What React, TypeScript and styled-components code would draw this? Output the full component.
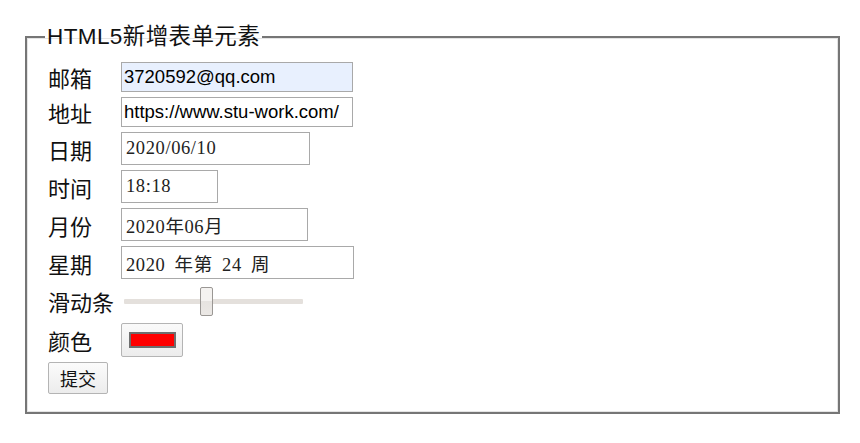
import styled, { createGlobalStyle } from "styled-components";

const GlobalStyle = createGlobalStyle`
  body {
    margin: 0;
    background: #fff;
    font-family: "Liberation Sans", "Noto Sans CJK SC", sans-serif;
    color: #111;
  }
`;

const Page = styled.div`
  padding: 24px 0 0 25px;
`;

const Fieldset = styled.fieldset`
  box-sizing: border-box;
  width: 815px;
  height: 390px;
  margin: 0;
  padding: 12px 0 0 21px;
  border: 2px solid #767676;
  box-shadow: inset 0 0 0 1px #e4e4e4;
`;

const Legend = styled.legend`
  margin-left: -3px;
  padding: 0 2px;
  font-size: 22.5px;
  letter-spacing: 0.4px;
  line-height: 26px;
  color: #111;
`;

const Form = styled.form`
  display: flex;
  flex-direction: column;
  gap: 5px;
`;

const Row = styled.div<{ $h: number }>`
  display: flex;
  align-items: center;
  height: ${(p) => p.$h}px;
`;

const Label = styled.span`
  min-width: 73px;
  font-family: "Noto Sans CJK SC", sans-serif;
  font-size: 22px;
  line-height: 26px;
  color: #111;
`;

const TextInput = styled.input<{ $w: number; $filled?: boolean }>`
  box-sizing: border-box;
  width: ${(p) => p.$w}px;
  height: 100%;
  margin: 0;
  padding: 0 2px;
  border: 1px solid #a9a9a9;
  border-radius: 0;
  outline: none;
  background: ${(p) => (p.$filled ? "#e8f0fe" : "#fff")};
  font-family: "Liberation Sans", sans-serif;
  font-size: 18.5px;
  color: #000;
`;

const DateInput = styled.input<{ $w: number }>`
  box-sizing: border-box;
  width: ${(p) => p.$w}px;
  height: 100%;
  margin: 0;
  padding: 0 4px;
  border: 1px solid #a9a9a9;
  border-radius: 0;
  outline: none;
  background: #fff;
  font-family: "Liberation Serif", "Noto Sans CJK SC", serif;
  font-size: 18.5px;
  letter-spacing: 0.6px;
  word-spacing: 4px;
  color: #222;
`;

const Range = styled.input`
  -webkit-appearance: none;
  appearance: none;
  width: 179px;
  height: 30px;
  margin: 0 0 0 3px;
  background: transparent;

  &::-webkit-slider-runnable-track {
    height: 5px;
    background: #e4e0dc;
    border-radius: 1px;
  }

  &::-webkit-slider-thumb {
    -webkit-appearance: none;
    width: 13px;
    height: 29px;
    margin-top: -12px;
    box-sizing: border-box;
    border: 1px solid #9a9794;
    border-radius: 2px;
    background: linear-gradient(#f4f2f0 0%, #f4f2f0 50%, #e6e3e0 50%, #ebe8e5 100%);
  }
`;

const ColorButton = styled.button`
  box-sizing: border-box;
  width: 62px;
  height: 34px;
  margin: 0;
  padding: 0;
  display: flex;
  align-items: center;
  justify-content: center;
  border: 1px solid #b4b4b4;
  border-radius: 2px;
  background: linear-gradient(#fafafa, #ececec);
`;

const Swatch = styled.span<{ $color: string }>`
  box-sizing: border-box;
  width: 47px;
  height: 16px;
  background: ${(p) => p.$color};
  border: 2px solid #6e6e6e;
`;

const Submit = styled.button`
  box-sizing: border-box;
  width: 60px;
  height: 32px;
  margin: 0;
  padding: 0;
  border: 1px solid #b4b4b4;
  border-radius: 2px;
  background: linear-gradient(#fbfbfb, #ececec);
  font-family: "Noto Sans CJK SC", sans-serif;
  font-size: 18px;
  color: #111;
`;

export default function App() {
  return (
    <Page>
      <GlobalStyle />
      <Fieldset>
        <Legend>HTML5新增表单元素</Legend>
        <Form onSubmit={(e) => e.preventDefault()}>
          <Row $h={30}>
            <Label>邮箱</Label>
            <TextInput $w={232} $filled readOnly value="3720592@qq.com" />
          </Row>
          <Row $h={30}>
            <Label>地址</Label>
            <TextInput $w={232} readOnly value="https://www.stu-work.com/" />
          </Row>
          <Row $h={33}>
            <Label>日期</Label>
            <DateInput $w={189} readOnly value="2020/06/10" />
          </Row>
          <Row $h={33}>
            <Label>时间</Label>
            <DateInput $w={97} readOnly value="18:18" />
          </Row>
          <Row $h={33}>
            <Label>月份</Label>
            <DateInput $w={187} readOnly value="2020年06月" />
          </Row>
          <Row $h={33}>
            <Label>星期</Label>
            <DateInput $w={233} readOnly value="2020 年第 24 周" />
          </Row>
          <Row $h={34}>
            <Label>滑动条</Label>
            <Range type="range" min={0} max={100} defaultValue={46} />
          </Row>
          <Row $h={34}>
            <Label>颜色</Label>
            <ColorButton type="button">
              <Swatch $color="#ff0000" />
            </ColorButton>
          </Row>
          <Row $h={32}>
            <Submit type="submit">提交</Submit>
          </Row>
        </Form>
      </Fieldset>
    </Page>
  );
}
